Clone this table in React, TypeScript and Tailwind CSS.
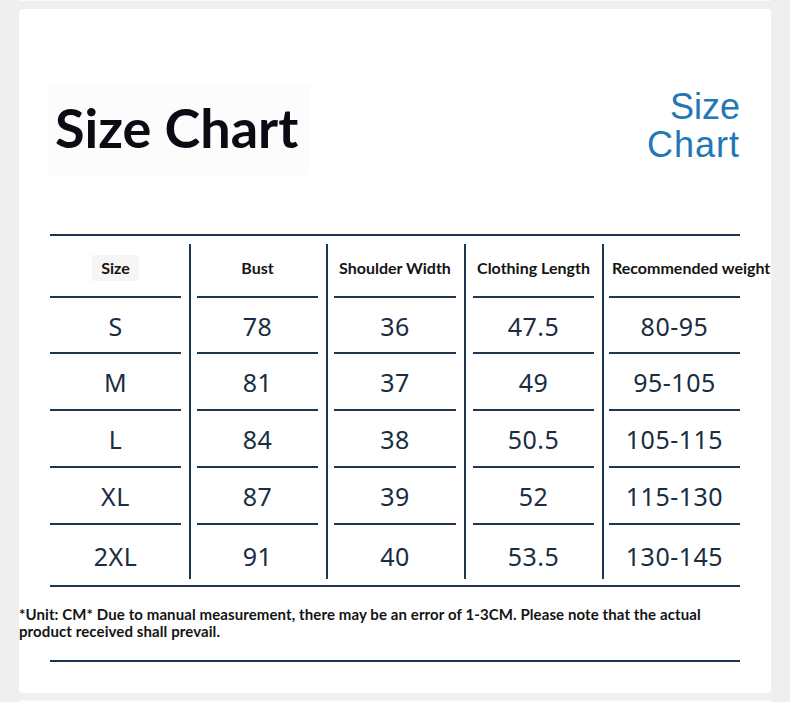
const headers = ['Size', 'Bust', 'Shoulder Width', 'Clothing Length', 'Recommended weight'];

const rows = [
  ['S', '78', '36', '47.5', '80-95'],
  ['M', '81', '37', '49', '95-105'],
  ['L', '84', '38', '50.5', '105-115'],
  ['XL', '87', '39', '52', '115-130'],
  ['2XL', '91', '40', '53.5', '130-145'],
];

const rowHeights = ['h-[54px]', 'h-[55px]', 'h-[55px]', 'h-[55px]', 'h-[60px]'];

const columnWidths = ['w-[131px]', 'w-[121px]', 'w-[122px]', 'w-[121px]', 'w-[131px]'];

// space after each column: before the divider / after the divider
const gapAfter = [
  ['w-[8px]', 'w-[6px]'],
  ['w-[8px]', 'w-[6px]'],
  ['w-[8px]', 'w-[7px]'],
  ['w-[8px]', 'w-[5px]'],
];

function Column({ index }: { index: number }) {
  const isLast = index === headers.length - 1;
  return (
    <div className={`flex shrink-0 flex-col ${columnWidths[index]}`}>
      {/* header cell */}
      <div
        className={`flex h-[60px] items-center pt-[3px] font-['Lato',sans-serif] text-[16px] font-bold leading-[18px] text-[#141414] ${
          isLast ? 'justify-start pl-[3px]' : 'justify-center'
        }`}
      >
        <span className={`whitespace-nowrap ${index === 0 ? 'bg-[#f6f6f6] px-[9px] py-[4px]' : ''}`}>
          {headers[index]}
        </span>
      </div>
      {rows.map((row, r) => (
        <div key={r} className="flex flex-col">
          <div className="h-[2px] bg-[#1d3750]" />
          <div
            className={`flex items-center justify-center pt-[3px] font-['Noto_Sans',sans-serif] text-[25px] tracking-[0.5px] text-[#1a2d42] ${rowHeights[r]}`}
          >
            {row[index]}
          </div>
        </div>
      ))}
    </div>
  );
}

function Divider() {
  return <div className="mb-[6px] mt-[8px] w-[2px] shrink-0 bg-[#1d3750]" />;
}

export default function App() {
  return (
    <div className="h-[702px] w-[790px] overflow-hidden bg-[#efefef] px-[19px]">
      {/* end of previous card */}
      <div className="h-[1px] bg-[#fafafa]" />

      <div className="mt-[8px] flex h-[684px] flex-col rounded-[4px] bg-white">
        {/* titles */}
        <div className="flex items-start justify-between pl-[28px] pr-[31px] pt-[76px]">
          <div className="bg-[#fcfcfc] pb-[20px] pl-[8px] pr-[12px] pt-[16px]">
            <h1 className="font-['Lato',sans-serif] text-[54px] font-bold leading-[54px] text-[#0b0b14]">
              Size Chart
            </h1>
          </div>
          <div className="mt-[3px] text-right font-['Liberation_Sans',Arial,sans-serif] text-[36px] leading-[38px] text-[#2377b4]">
            <p>Size</p>
            <p className="tracking-[1px]">Chart</p>
          </div>
        </div>

        {/* table */}
        <div className="mx-[31px] mt-[59px] border-t-2 border-b-2 border-[#1d3750]">
          <div className="flex">
            {headers.map((_, i) => (
              <div key={i} className="flex">
                <Column index={i} />
                {i < headers.length - 1 && (
                  <>
                    <div className={gapAfter[i][0]} />
                    <Divider />
                    <div className={gapAfter[i][1]} />
                  </>
                )}
              </div>
            ))}
          </div>
        </div>

        <p className="mt-[19px] font-['Lato',sans-serif] text-[15px] font-bold leading-[17px] tracking-[0.1px] text-[#141414]">
          *Unit: CM* Due to manual measurement, there may be an error of 1-3CM. Please note that the actual
          <br />
          product received shall prevail.
        </p>

        <div className="mx-[31px] mt-[20px] h-[2px] bg-[#1d3750]" />
      </div>

      {/* start of next card */}
      <div className="mt-[7px] h-[2px] rounded-t-[4px] bg-[#fafafa]" />
    </div>
  );
}
